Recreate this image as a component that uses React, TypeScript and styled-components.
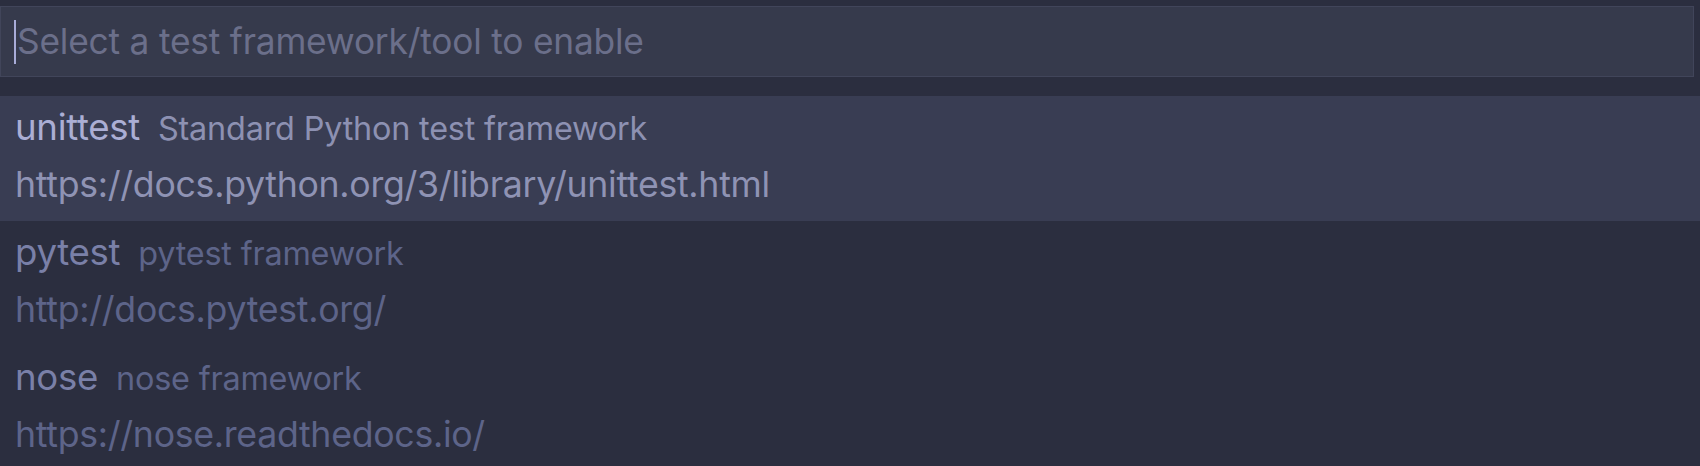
import React from "react";
import styled, { createGlobalStyle } from "styled-components";

const Global = createGlobalStyle`
  html, body { margin: 0; padding: 0; background: #2b2e3f; }
  body { font-family: Inter, "Noto Sans", sans-serif; width: 1700px; height: 466px; overflow: hidden; }
`;

const Panel = styled.div`
  display: flex;
  flex-direction: column;
  padding-top: 6px;
  width: 1700px;
`;

const InputBox = styled.div`
  display: flex;
  align-items: center;
  box-sizing: border-box;
  width: 1694px;
  height: 71px;
  background: #363a4c;
  border: 1px solid #41455a;
  padding-left: 13px;
`;

const Caret = styled.span`
  width: 2px;
  height: 44px;
  background: #a8acd8;
  flex: none;
`;

const Placeholder = styled.span`
  font-size: 35.3px;
  color: #6b6f8a;
  letter-spacing: -0.2px;
  padding-left: 1px;
  white-space: nowrap;
`;

const List = styled.div`
  display: flex;
  flex-direction: column;
  margin-top: 19px;
`;

const Row = styled.div<{ $active?: boolean }>`
  box-sizing: border-box;
  height: 125px;
  padding: 4px 15px 0;
  background: ${(p) => (p.$active ? "#393d53" : "transparent")};
  display: flex;
  flex-direction: column;
`;

const Line = styled.div<{ $second?: boolean }>`
  display: flex;
  align-items: baseline;
  height: 54px;
  line-height: 54px;
  margin-top: ${(p) => (p.$second ? "3px" : "0")};
  white-space: nowrap;
`;

const Label = styled.span<{ $active?: boolean }>`
  font-size: 36.6px;
  letter-spacing: -0.3px;
  color: ${(p) => (p.$active ? "#abaed4" : "#7a80a8")};
`;

const Desc = styled.span<{ $active?: boolean }>`
  font-size: 32.4px;
  letter-spacing: -0.2px;
  margin-left: 18px;
  color: ${(p) => (p.$active ? "#8d91b2" : "#5d6489")};
`;

const Url = styled.span<{ $active?: boolean }>`
  font-size: 35.7px;
  letter-spacing: -0.3px;
  color: ${(p) => (p.$active ? "#8f93b4" : "#5d6489")};
`;

const items = [
  { label: "unittest", desc: "Standard Python test framework", url: "https://docs.python.org/3/library/unittest.html" },
  { label: "pytest", desc: "pytest framework", url: "http://docs.pytest.org/" },
  { label: "nose", desc: "nose framework", url: "https://nose.readthedocs.io/" },
];

export default function App() {
  return (
    <>
      <Global />
      <Panel>
        <InputBox>
          <Caret />
          <Placeholder>Select a test framework/tool to enable</Placeholder>
        </InputBox>
        <List>
          {items.map((it, i) => (
            <Row key={it.label} $active={i === 0}>
              <Line>
                <Label $active={i === 0}>{it.label}</Label>
                <Desc $active={i === 0}>{it.desc}</Desc>
              </Line>
              <Line $second>
                <Url $active={i === 0}>{it.url}</Url>
              </Line>
            </Row>
          ))}
        </List>
      </Panel>
    </>
  );
}
